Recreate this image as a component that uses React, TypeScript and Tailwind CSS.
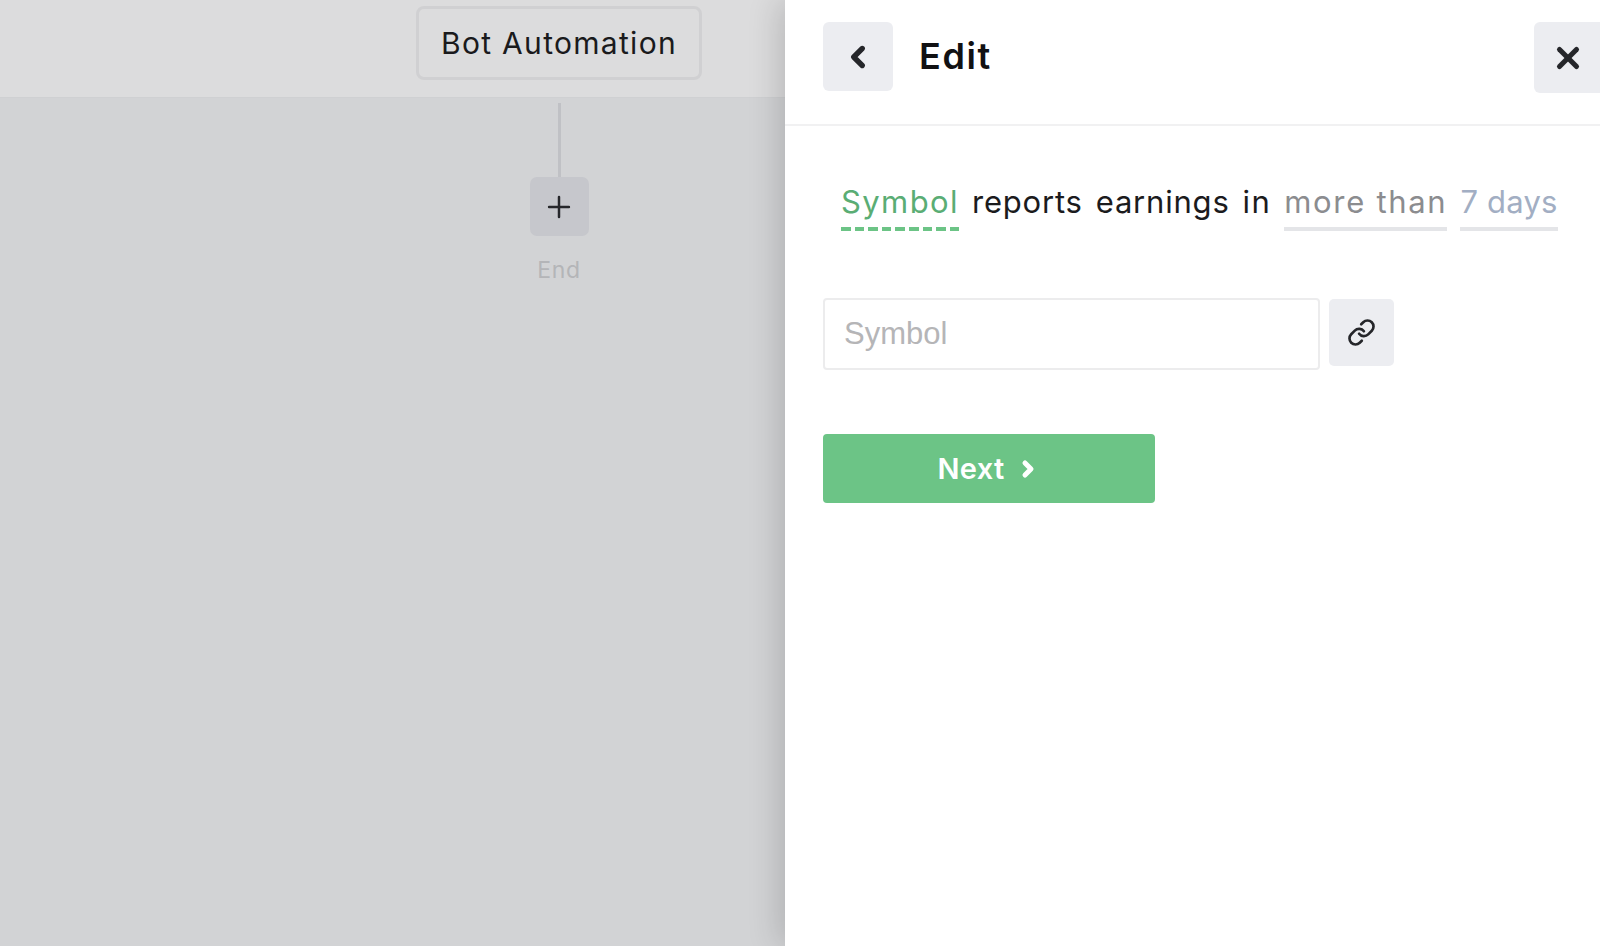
import { ChevronLeft, ChevronRight, Link, Plus, X } from "lucide-react";

const font = "font-['Inter','Noto_Sans',sans-serif]";

function Word({ children, className = "", line = "" }: { children: string; className?: string; line?: string }) {
  return (
    <span className={`flex flex-col ${className}`}>
      <span className="h-[46px] text-[31px] leading-[42px] whitespace-nowrap">{children}</span>
      <span className={`h-[4px] w-full ${line}`} />
    </span>
  );
}

export default function App() {
  return (
    <div className={`flex h-[946px] w-[1600px] overflow-hidden bg-white ${font}`}>
      <div className="flex w-[785px] shrink-0 flex-col bg-[#d2d3d5]">
        <div className="h-[98px] shrink-0 border-b border-[#cfd0d2] bg-[#dcdcdd] pl-[416px] pt-[6px]">
          <div className="flex h-[74px] w-[286px] items-center justify-center rounded-[8px] border-[3px] border-[#d0d0d2] text-[30px] tracking-[1.3px] text-[#1a1a1c]">
            Bot Automation
          </div>
        </div>
        <div className="ml-[416px] flex w-[286px] flex-col items-center pt-[5px]">
          <div className="h-[74px] w-[3px] bg-[#c0c1c5]" />
          <div className="flex h-[59px] w-[59px] items-center justify-center rounded-[7px] bg-[#c6c7cc] pt-[1px]">
            <Plus size={34} strokeWidth={1.75} className="text-[#26272b]" />
          </div>
          <div className="mt-[17px] text-[23px] leading-[34px] tracking-[0.6px] text-[#b4b5b8]">End</div>
        </div>
      </div>
      <div className="relative z-10 flex-1 bg-white shadow-[-6px_0_30px_rgba(0,0,0,0.16)]">
        <div className="flex h-[126px] items-start justify-between border-b-2 border-[#f1f1f2] pl-[38px] pt-[22px]">
          <div className="flex items-center">
            <button className="flex h-[69px] w-[70px] items-center justify-center rounded-[6px] bg-[#ecedf1]">
              <ChevronLeft size={34} strokeWidth={3.8} className="text-[#25262a]" />
            </button>
            <h1 className="ml-[26px] pb-[2px] text-[36px] font-semibold tracking-[1.6px] text-[#111113]">Edit</h1>
          </div>
          <button className="-mr-[2px] flex h-[71px] w-[68px] items-center justify-center rounded-l-[6px] bg-[#ecedf1]">
            <X size={34} strokeWidth={3.6} className="text-[#25262a]" />
          </button>
        </div>
        <div className="flex gap-[13px] pl-[56px] pt-[55px] text-[#1b1b1d]">
          <Word className="tracking-[1.4px] text-[#5aad74]" line="bg-[repeating-linear-gradient(90deg,#6cc486_0_9.5px,transparent_9.5px_13.6px)]">Symbol</Word>
          <Word className="tracking-[0.8px]">reports</Word>
          <Word className="tracking-[0.8px]">earnings</Word>
          <Word className="tracking-[1.4px]">in</Word>
          <Word className="tracking-[1.7px] text-[#8b8c8f]" line="bg-[#e4e5e8]">more than</Word>
          <Word className="tracking-[0.2px] text-[#a2aec3]" line="bg-[#e4e5e8]">7 days</Word>
        </div>
        <div className="mt-[67px] flex items-start pl-[38px]">
          <input
            placeholder="Symbol"
            className="h-[72px] w-[497px] rounded-[4px] border-2 border-[#ececed] pl-[19px] font-['Liberation_Sans',sans-serif] text-[31px] placeholder:text-[#b5b5b7]"
          />
          <button className="ml-[9px] mt-[1px] flex h-[67px] w-[65px] items-center justify-center rounded-[5px] bg-[#ecedf1]">
            <Link size={29} strokeWidth={2.2} className="text-[#25262a]" />
          </button>
        </div>
        <button className="ml-[38px] mt-[64px] flex h-[69px] w-[332px] items-center justify-center gap-[12px] rounded-[4px] bg-[#6cc486] text-[29px] font-semibold tracking-[0.3px] text-white">
          Next
          <ChevronRight size={24} strokeWidth={5} />
        </button>
      </div>
    </div>
  );
}
